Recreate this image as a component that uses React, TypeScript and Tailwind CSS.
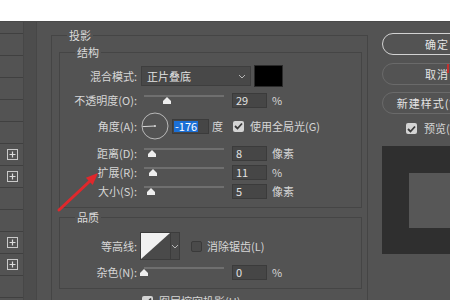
import React from 'react'

const font = "font-['Noto_Sans_CJK_SC','Liberation_Sans',sans-serif]"

function Chevron() {
  return (
    <svg width="8" height="5" viewBox="0 0 8 5">
      <path d="M1 1 L4 4 L7 1" fill="none" stroke="#b5b5b5" strokeWidth="1" />
    </svg>
  )
}

function Slider({ pos }: { pos: number }) {
  return (
    <div className="relative w-[80px] h-[14px] ml-[7px] shrink-0">
      <div className="absolute left-0 right-0 top-[2px] h-[2px] bg-[#6f6f6f]" />
      <svg className="absolute top-[4px]" style={{ left: pos - 4 }} width="8" height="7" viewBox="0 0 8 7">
        <path d="M4 0 L8 4 V7 H0 V4 Z" fill="#eeeeee" />
      </svg>
    </div>
  )
}

function NumInput({ value }: { value: string }) {
  return (
    <div className="ml-[8px] w-[35px] h-[15px] shrink-0 bg-[#464646] border border-[#3b3b3b] text-[11px] leading-[13px] pl-[3px] text-[#e2e2e2]">
      {value}
    </div>
  )
}

function Check({ on }: { on: boolean }) {
  return on ? (
    <div className="w-[11px] h-[11px] shrink-0 rounded-[2px] bg-[#d4d4d4] flex items-center justify-center">
      <svg width="9" height="8" viewBox="0 0 9 8">
        <path d="M1 4 L3.5 6.5 L8 1.5" fill="none" stroke="#3a3a3a" strokeWidth="1.8" />
      </svg>
    </div>
  ) : (
    <div className="w-[11px] h-[11px] shrink-0 rounded-[2px] bg-[#4a4a4a] border border-[#3a3a3a]" />
  )
}

function Label({ children }: { children: React.ReactNode }) {
  return <div className="w-[77px] shrink-0 text-right text-[11px] text-[#d6d6d6] whitespace-nowrap">{children}</div>
}

function SliderRow({ label, pos, value, unit, mt }: { label: string; pos: number; value: string; unit: string; mt: string }) {
  return (
    <div className={`flex items-center h-[14px] ${mt}`}>
      <Label>{label}</Label>
      <Slider pos={pos} />
      <NumInput value={value} />
      <span className="ml-[5px] text-[11px] text-[#d6d6d6]">{unit}</span>
    </div>
  )
}

function PlusBox() {
  return (
    <div className="ml-auto mr-[5px] w-[11px] h-[11px] border border-[#c9c9c9] flex items-center justify-center">
      <svg width="7" height="7" viewBox="0 0 7 7">
        <path d="M3.5 0.5 V6.5 M0.5 3.5 H6.5" stroke="#dcdcdc" strokeWidth="1.2" />
      </svg>
    </div>
  )
}

function Button({ label, primary }: { label: string; primary?: boolean }) {
  return (
    <div
      className={`w-[110px] h-[22px] rounded-full flex items-center justify-center text-[11px] text-[#e4e4e4] tracking-[1px] ${
        primary ? 'border-[1.5px] border-[#d2d2d2]' : 'border border-[#6a6a6a]'
      }`}
    >
      {label}
    </div>
  )
}

export default function App() {
  const rows = Array.from({ length: 13 }, (_, i) => i)
  const plusRows = [5, 6, 9, 10]

  return (
    <div className={`relative w-[450px] h-[300px] overflow-hidden bg-white flex flex-col ${font}`}>
      <div className="h-[21px] shrink-0 bg-white" />

      <div className="flex-1 flex bg-[#535353] border-t border-[#4a4a4a]">
        {/* style list */}
        <div className="w-[24px] shrink-0 pt-[11px] border-r border-[#474747]">
          {rows.map((i) => (
            <div key={i} className="h-[22px] flex items-center border-t border-[#404040]">
              {plusRows.includes(i) && <PlusBox />}
            </div>
          ))}
        </div>
        <div className="w-[13px] shrink-0 bg-[#4d4d4d] border-r border-[#474747]" />
        <div className="w-[14px] shrink-0" />

        {/* 投影 */}
        <div className="relative w-[317px] shrink-0 mt-[13px] h-[300px] border border-[#454545]">
          <span className="absolute left-[15px] top-[-9px] px-[2px] bg-[#535353] text-[11px] text-[#dadada]">投影</span>

          {/* 结构 */}
          <div className="relative ml-[7px] mt-[16px] w-[303px] h-[156px] border border-[#454545] pt-[13px]">
            <span className="absolute left-[15px] top-[-9px] px-[2px] bg-[#535353] text-[11px] text-[#dadada]">结构</span>

            <div className="flex items-center h-[20px]">
              <Label>混合模式:</Label>
              <div className="ml-[4px] w-[110px] h-[20px] shrink-0 bg-[#484848] border border-[#3e3e3e] flex items-center pl-[5px] pr-[4px] text-[11px] text-[#e2e2e2]">
                <span>正片叠底</span>
                <span className="ml-auto"><Chevron /></span>
              </div>
              <div className="ml-[3px] w-[29px] h-[22px] shrink-0 bg-black border border-[#2a2a2a]" />
            </div>

            <SliderRow label="不透明度(O):" pos={23} value="29" unit="%" mt="mt-[7px]" />

            <div className="flex items-center h-[28px] mt-[5px]">
              <Label>角度(A):</Label>
              <svg className="ml-[4px] shrink-0" width="28" height="28" viewBox="0 0 28 28">
                <circle cx="14" cy="14" r="13" fill="none" stroke="#b8b8b8" strokeWidth="1" />
                <path d="M1.5 14.6 L14 14" stroke="#d8d8d8" strokeWidth="1" />
                <circle cx="14" cy="14" r="1" fill="#d8d8d8" />
              </svg>
              <div className="ml-[3px] w-[37px] h-[15px] shrink-0 bg-[#464646] border border-[#3b3b3b] flex items-center pl-[1px]">
                <span className="bg-[#1b6fd6] text-white text-[11px] leading-[11px] px-[1px]">-176</span>
              </div>
              <span className="ml-[3px] text-[11px] text-[#d6d6d6]">度</span>
              <div className="ml-[10px]"><Check on /></div>
              <span className="ml-[6px] text-[11px] text-[#d6d6d6] whitespace-nowrap">使用全局光(G)</span>
            </div>

            <SliderRow label="距离(D):" pos={8} value="8" unit="像素" mt="mt-[6px]" />
            <SliderRow label="扩展(R):" pos={9} value="11" unit="%" mt="mt-[5px]" />
            <SliderRow label="大小(S):" pos={7} value="5" unit="像素" mt="mt-[5px]" />
          </div>

          {/* 品质 */}
          <div className="relative ml-[7px] mt-[9px] w-[303px] h-[72px] border border-[#454545] pt-[14px]">
            <span className="absolute left-[15px] top-[-9px] px-[2px] bg-[#535353] text-[11px] text-[#dadada]">品质</span>

            <div className="flex items-center h-[28px]">
              <Label>等高线:</Label>
              <div className="ml-[3px] w-[40px] h-[28px] shrink-0 flex border border-[#3c3c3c] bg-[#4a4a4a]">
                <svg width="29" height="26" viewBox="0 0 29 26">
                  <path d="M0 0 H29 L0 26 Z" fill="#f2f2f2" />
                </svg>
                <div className="flex-1 border-l border-[#3c3c3c] flex items-center justify-center">
                  <Chevron />
                </div>
              </div>
              <div className="ml-[11px]"><Check on={false} /></div>
              <span className="ml-[5px] text-[11px] text-[#d6d6d6] whitespace-nowrap">消除锯齿(L)</span>
            </div>

            <SliderRow label="杂色(N):" pos={0} value="0" unit="%" mt="mt-[5px]" />
          </div>

          <div className="flex items-center mt-[4px] ml-[90px]">
            <Check on />
            <span className="ml-[6px] text-[11px] text-[#d6d6d6] whitespace-nowrap">图层挖空投影(U)</span>
          </div>
        </div>

        <div className="w-[14px] shrink-0" />

        {/* buttons + preview */}
        <div className="w-[120px] shrink-0 pt-[11px] flex flex-col">
          <Button label="确定" primary />
          <div className="mt-[8px]"><Button label="取消" /></div>
          <div className="mt-[7px]"><Button label="新建样式(W)..." /></div>
          <div className="mt-[9px] flex items-center h-[11px]">
            <div className="ml-[24px]"><Check on /></div>
            <span className="ml-[7px] text-[11px] text-[#d6d6d6] whitespace-nowrap">预览(V)</span>
          </div>
          <div className="mt-[12px] w-[110px] h-[108px] bg-[#2f2f2f] pt-[27px] pl-[27px]">
            <div className="w-[55px] h-[55px] bg-[#575757]" />
          </div>
        </div>
      </div>

      {/* annotation arrow */}
      <svg className="absolute inset-0 pointer-events-none" width="450" height="300" viewBox="0 0 450 300">
        <path d="M59 210 L90 181" stroke="#e0282c" strokeWidth="3" strokeLinecap="round" />
        <path d="M98 173 L92.7 184.9 L85.9 177.7 Z" fill="#e0282c" />
      </svg>
      <div className="absolute left-[447px] top-[64px] w-[2px] h-[9px] bg-[#c23030]" />
    </div>
  )
}
